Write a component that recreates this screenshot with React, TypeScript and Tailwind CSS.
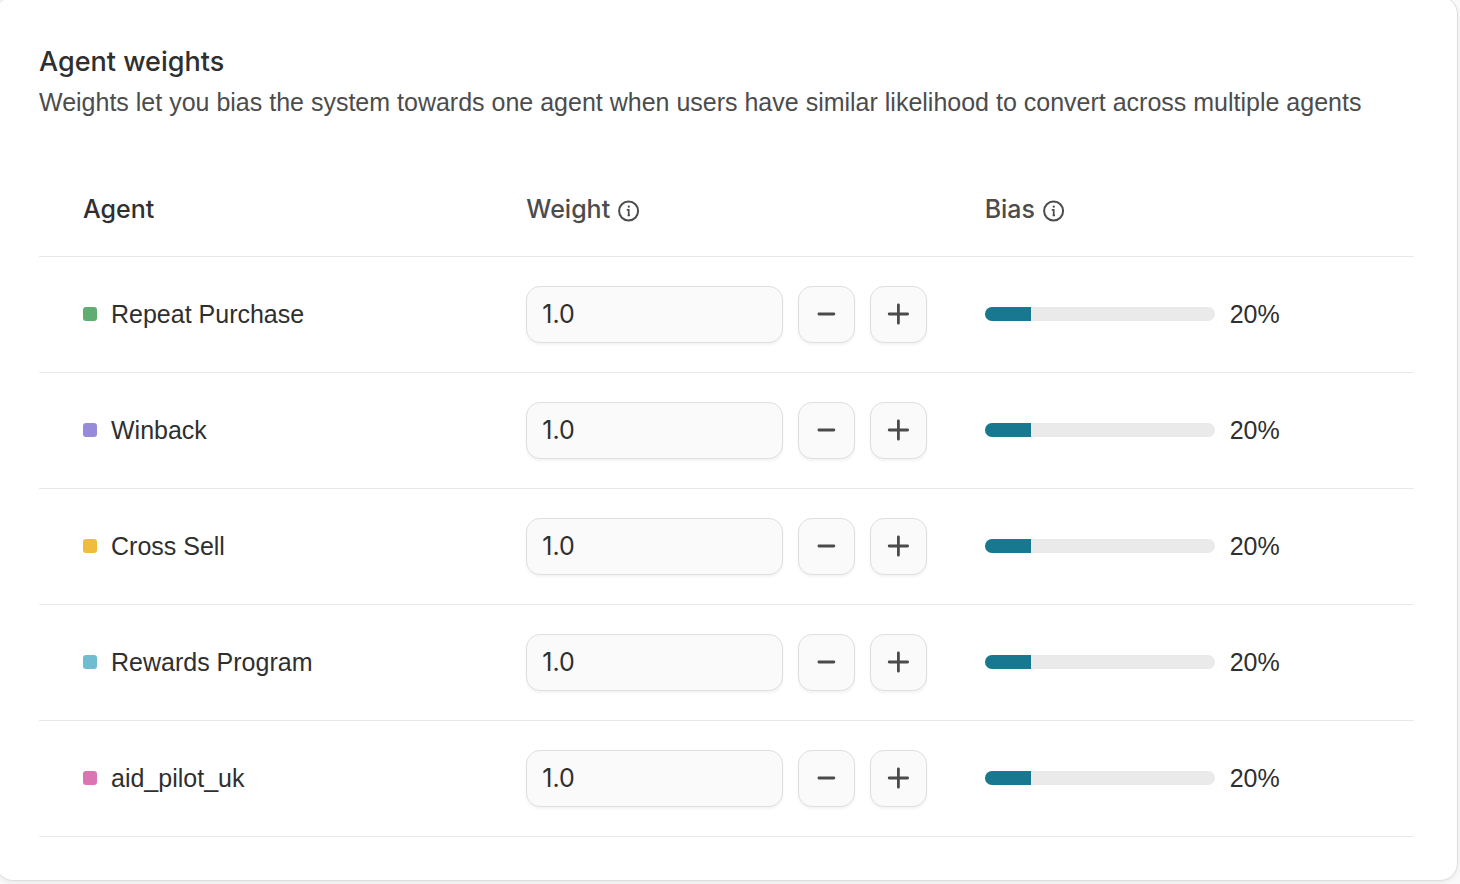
import { useState } from "react";

interface Agent {
  id: string;
  name: string;
  color: string;
  weight: number;
}

interface WeightInputProps {
  agent: Agent;
  onChange: (id: string, weight: number) => void;
}

const initialAgents: Agent[] = [
  { id: "repeat", name: "Repeat Purchase", color: "bg-[#60ad71]", weight: 1 },
  { id: "winback", name: "Winback", color: "bg-[#978ad8]", weight: 1 },
  { id: "cross", name: "Cross Sell", color: "bg-[#efbd3b]", weight: 1 },
  { id: "rewards", name: "Rewards Program", color: "bg-[#70bdd1]", weight: 1 },
  { id: "pilot", name: "aid_pilot_uk", color: "bg-[#db74b2]", weight: 1 },
];

const InfoIcon = () => (
  <svg className="mt-1" width="22" height="22" viewBox="0 0 22 22" fill="none" aria-hidden="true">
    <circle cx="10.6" cy="11" r="9.5" stroke="currentColor" strokeWidth="2" />
    <circle cx="10.8" cy="6.7" r="1.1" fill="currentColor" />
    <path d="M8.8 9.9h1.9v5.6M9.6 15.4h2.4" stroke="currentColor" strokeWidth="1.7" />
  </svg>
);

const MinusIcon = () => (
  <svg width="24" height="24" viewBox="0 0 24 24" fill="none" aria-hidden="true">
    <path d="M3.9 12h15" stroke="currentColor" strokeWidth="2.8" strokeLinecap="round" />
  </svg>
);

const PlusIcon = () => (
  <svg width="24" height="24" viewBox="0 0 24 24" fill="none" aria-hidden="true">
    <path d="M11.4 2.8v18.4M2.2 12h18.4" stroke="currentColor" strokeWidth="2.8" strokeLinecap="round" />
  </svg>
);

const WeightInput = (props: WeightInputProps) => {
  const { agent, onChange } = props;
  const buttonClass =
    "flex h-[57px] w-[57px] shrink-0 items-center justify-center rounded-[14px] border border-[#dfdfdf] bg-[#fafafa] text-[#4a4a4a] shadow-[0_2px_3px_rgba(0,0,0,0.05)] hover:bg-[#f2f2f2]";

  return (
    <div className="flex gap-[15px]">
      <input
        className="h-[57px] w-[257px] min-w-0 rounded-[14px] border border-[#dfdfdf] bg-[#fafafa] px-[15px] font-['Inter',sans-serif] text-[25px] text-[#2f2f2f] shadow-[0_2px_3px_rgba(0,0,0,0.05)]"
        type="text"
        inputMode="decimal"
        aria-label={`${agent.name} weight`}
        value={agent.weight.toFixed(1)}
        onChange={(event) => onChange(agent.id, Number(event.target.value) || 0)}
      />
      <button
        type="button"
        className={buttonClass}
        aria-label={`Decrease ${agent.name} weight`}
        onClick={() => onChange(agent.id, Math.max(0, agent.weight - 0.1))}
      >
        <MinusIcon />
      </button>
      <button
        type="button"
        className={buttonClass}
        aria-label={`Increase ${agent.name} weight`}
        onClick={() => onChange(agent.id, agent.weight + 0.1)}
      >
        <PlusIcon />
      </button>
    </div>
  );
};

const BiasBar = ({ name, value }: { name: string; value: number }) => (
  <div className="flex items-center gap-[15px]">
    <div
      className="h-[14px] w-[230px] overflow-hidden rounded-full bg-[#eaeaea]"
      role="progressbar"
      aria-label={`${name} bias`}
      aria-valuenow={value}
      aria-valuemin={0}
      aria-valuemax={100}
    >
      <div className="h-full bg-[#17788f]" style={{ width: `${value}%` }}></div>
    </div>
    <span>{value}%</span>
  </div>
);

const App = () => {
  const [agents, setAgents] = useState<Agent[]>(initialAgents);
  const total = agents.reduce((sum, agent) => sum + agent.weight, 0);

  const onChangeWeight = (id: string, weight: number) => {
    setAgents(agents.map((agent) => (agent.id === id ? { ...agent, weight } : agent)));
  };

  return (
    <main className="min-h-screen overflow-hidden bg-[#f9f9f9] pr-0.5 font-['Liberation_Sans',sans-serif] text-[25px] leading-8 text-[#2f2f2f]">
      <section className="-mt-1 -ml-[5px] rounded-[18px] border border-[#dedede] bg-white px-[43px] pt-[47px] pb-[43px] shadow-[0_2px_4px_rgba(0,0,0,0.06)]">
        <h1 className="font-['Inter',sans-serif] text-[27px] leading-9 font-medium">Agent weights</h1>
        <p className="mt-1.5 text-[#4c4c4c]">
          Weights let you bias the system towards one agent when users have similar likelihood to
          convert across multiple agents
        </p>
        <table className="mt-11 w-full table-fixed border-collapse text-left">
          <thead className="font-['Inter',sans-serif] text-[25px]">
            <tr className="h-[94px] border-b border-[#e8e8e8]">
              <th className="w-1/3 pl-11 font-medium">Agent</th>
              <th className="w-1/3 pl-[29px] font-medium text-[#4c4c4c]">
                <div className="flex items-center gap-2">
                  Weight <InfoIcon />
                </div>
              </th>
              <th className="w-1/3 pl-[29px] font-medium text-[#4c4c4c]">
                <div className="flex items-center gap-2">
                  Bias <InfoIcon />
                </div>
              </th>
            </tr>
          </thead>
          <tbody>
            {agents.map((agent) => (
              <tr key={agent.id} className="h-[116px] border-b border-[#e8e8e8]">
                <td className="pl-11">
                  <div className="flex items-center gap-[14px]">
                    <span className={`h-[14px] w-[14px] rounded-[3px] ${agent.color}`}></span>
                    {agent.name}
                  </div>
                </td>
                <td className="pl-[29px]">
                  <WeightInput agent={agent} onChange={onChangeWeight} />
                </td>
                <td className="pl-[29px]">
                  <BiasBar
                    name={agent.name}
                    value={total > 0 ? Math.round((agent.weight / total) * 100) : 0}
                  />
                </td>
              </tr>
            ))}
          </tbody>
        </table>
      </section>
    </main>
  );
};

export default App;
